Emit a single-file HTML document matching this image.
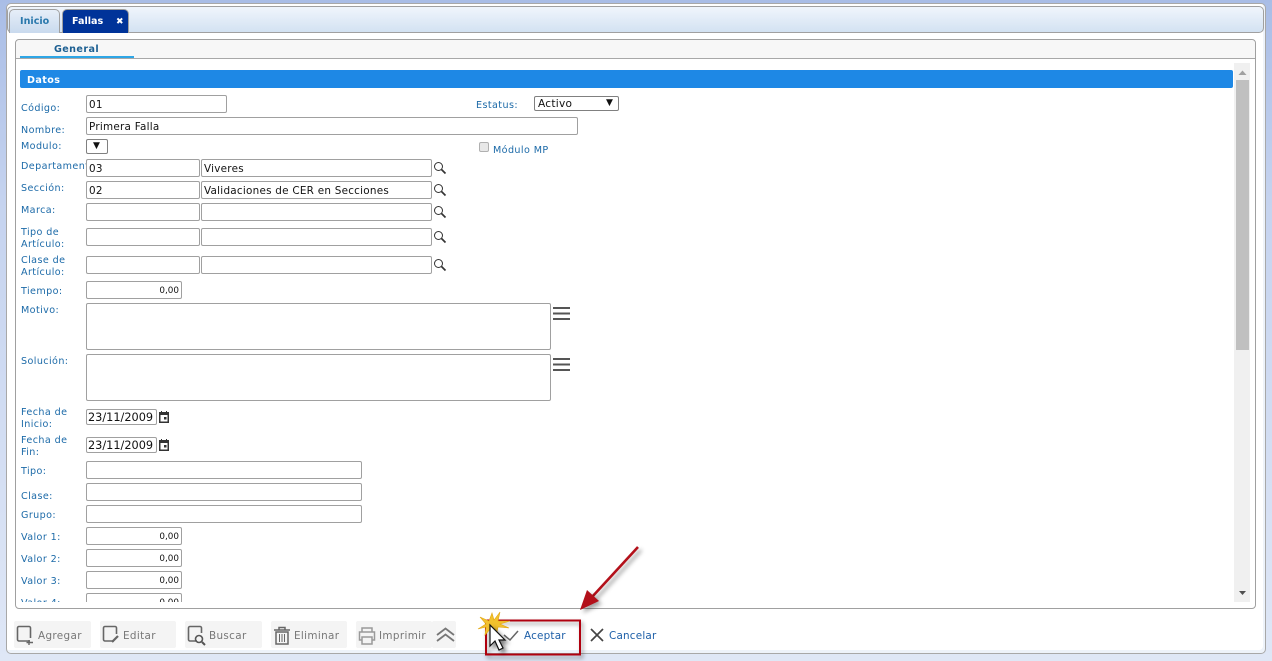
<!DOCTYPE html>
<html><head><meta charset="utf-8">
<style>
html,body{margin:0;padding:0}
body{width:1272px;height:661px;overflow:hidden;position:relative;background:linear-gradient(#a9bde6,#c5d3ef 30%,#dfe7f6 100%);font-family:"DejaVu Sans","Liberation Sans",sans-serif}
div,span{position:absolute;box-sizing:border-box;white-space:nowrap}
.l{left:21px;font-size:9.6px;line-height:12px;color:#1c6aa8;letter-spacing:.4px;margin-top:2px}
.i{background:#fff;border:1px solid #a0a0a0;border-radius:2px;font-size:10.4px;line-height:16px;color:#111;padding:1px 0 0 2px;height:18px;letter-spacing:.25px}
.n{text-align:right;padding:1px 2px 0 0;font-size:8.8px;width:96px;left:86px;height:18px;letter-spacing:0}
.d{left:86px;width:71px;height:16px;line-height:14px;font-size:11.3px;padding:1px 0 0 1px;overflow:hidden;letter-spacing:0}
.btn{top:621px;height:27px;background:#f4f4f4;border-radius:2px}
.t{font-size:10.4px;color:#777;line-height:14px;top:629px;letter-spacing:.35px}
svg{position:absolute;overflow:visible}
</style></head><body>
<div style="left:6px;top:3px;width:1260px;height:651px;background:#fff;border:1px solid #a8a8a8;border-radius:5px;box-shadow:inset -2px -3px 0 #eef3fa"></div>
<div style="left:7px;top:6px;width:1257px;height:27px;background:linear-gradient(#f0f5fc,#d3e2f2);border:1px solid #a0a0a0;border-radius:5px"></div>
<div style="left:9px;top:9px;width:51px;height:24px;background:linear-gradient(#e6eef8,#c9daee);border:1px solid #a0a0a0;border-bottom:0;border-radius:5px 5px 0 0;font-size:9.6px;font-weight:bold;color:#2a78ac;line-height:24px;padding-left:10px">Inicio</div>
<div style="left:62px;top:9px;width:67px;height:24px;background:#003399;border:1px solid #a0a0a0;border-bottom:0;border-radius:5px 5px 0 0;font-size:9.6px;font-weight:bold;color:#fff;line-height:24px;padding-left:9px">Fallas<span style="left:53px;top:0;font-size:9px">✖</span></div>

<div style="left:15px;top:39px;width:1241px;height:570px;background:#fff;border:1px solid #a0a0a0;border-radius:4px"></div>
<div style="left:16px;top:40px;width:1239px;height:19px;background:#f7f7f7;border-bottom:1px solid #a8a8a8;border-radius:4px 4px 0 0"></div>
<div style="left:20px;top:56px;width:114px;height:2px;background:#2ea6e6"></div>
<div style="left:54px;top:43px;font-size:9.6px;font-weight:bold;color:#1c5f92;line-height:13px;letter-spacing:.4px">General</div>
<div style="left:20px;top:70px;width:1213px;height:18px;background:#1e88e5;border-radius:2px;color:#fff;font-size:9.6px;font-weight:bold;line-height:19px;padding:1px 0 0 7px;letter-spacing:.4px">Datos</div>

<div style="left:1234px;top:63px;width:16px;height:539px;background:#f0f0f0"></div>
<div style="left:1236px;top:80px;width:13px;height:270px;background:#c0c0c0"></div>
<svg style="left:0;top:0" width="1272" height="661"><path d="M1238.500 75L1242.500 70.500L1246.500 75Z" fill="#a0a0a0"/><path d="M1239 591H1246L1242.500 595Z" fill="#505050"/></svg>

<div class="l" style="top:101px">Código:</div>
<div class="i" style="left:86px;top:95px;width:141px">01</div>
<div class="l" style="top:98px;left:476px">Estatus:</div>
<div class="i" style="left:534px;top:96px;width:85px;height:15px;line-height:13px;padding:1px 0 0 3px;border-color:#808080;font-size:10.6px">Activo<span style="left:71px;top:0;font-size:9px;color:#111">▼</span></div>
<div class="l" style="top:123px">Nombre:</div>
<div class="i" style="left:86px;top:117px;width:492px">Primera Falla</div>
<div class="l" style="top:139px">Modulo:</div>
<div class="i" style="left:86px;top:139px;width:22px;height:15px;line-height:13px;padding:0 0 0 6px;font-size:9px;border-color:#808080">▼</div>
<div style="left:479px;top:142px;width:10px;height:10px;background:#e8e8e8;border:1px solid #b0b0b0;border-radius:2px"></div>
<div class="l" style="top:143px;left:493px">Módulo MP</div>

<div class="l" style="top:159px;width:65px;overflow:hidden">Departamento:</div>
<div class="i" style="left:86px;top:159px;width:114px">03</div>
<div class="i" style="left:201px;top:159px;width:231px">Viveres</div>
<div class="l" style="top:181px">Sección:</div>
<div class="i" style="left:86px;top:181px;width:114px">02</div>
<div class="i" style="left:201px;top:181px;width:231px">Validaciones de CER en Secciones</div>
<div class="l" style="top:203px">Marca:</div>
<div class="i" style="left:86px;top:203px;width:114px"></div>
<div class="i" style="left:201px;top:203px;width:231px"></div>
<div class="l" style="top:225px">Tipo de<br>Artículo:</div>
<div class="i" style="left:86px;top:228px;width:114px"></div>
<div class="i" style="left:201px;top:228px;width:231px"></div>
<div class="l" style="top:253px">Clase de<br>Artículo:</div>
<div class="i" style="left:86px;top:256px;width:114px"></div>
<div class="i" style="left:201px;top:256px;width:231px"></div>

<svg style="left:0;top:0" width="1272" height="661" fill="none" stroke="#333">
<g stroke-width="1"><circle cx="438.500" cy="166.500" r="4"/><path d="M441.500 169.500L445.500 173.500" stroke-width="1.700"/>
<circle cx="438.500" cy="188.500" r="4"/><path d="M441.500 191.500L445.500 195.500" stroke-width="1.700"/>
<circle cx="438.500" cy="210.500" r="4"/><path d="M441.500 213.500L445.500 217.500" stroke-width="1.700"/>
<circle cx="438.500" cy="235.500" r="4"/><path d="M441.500 238.500L445.500 242.500" stroke-width="1.700"/>
<circle cx="438.500" cy="263.500" r="4"/><path d="M441.500 266.500L445.500 270.500" stroke-width="1.700"/></g>
<g stroke="#555" stroke-width="2"><path d="M553 308H570M553 313.500H570M553 319H570M553 359H570M553 364.500H570M553 370H570"/></g>
<g stroke="#999" stroke-width="1"><path d="M541 347L548 340M545 347L548 344M541 398L548 391M545 398L548 395"/></g>
<g fill="#333" stroke="none"><path d="M159 412h2v-1h1v1h4v-1h1v1h2v11h-10zM160.500 415v6.500h7V415zM164 417h2.500v2.500H164z" fill-rule="evenodd"/><path d="M159 440h2v-1h1v1h4v-1h1v1h2v11h-10zM160.500 443v6.500h7V443zM164 445h2.500v2.500H164z" fill-rule="evenodd"/></g>
</svg>

<div class="l" style="top:284px">Tiempo:</div>
<div class="i n" style="top:281px">0,00</div>
<div class="l" style="top:303px">Motivo:</div>
<div class="i" style="left:86px;top:303px;width:465px;height:47px"></div>
<div class="l" style="top:354px">Solución:</div>
<div class="i" style="left:86px;top:354px;width:465px;height:47px"></div>
<div class="l" style="top:405px">Fecha de<br>Inicio:</div>
<div class="i d" style="top:409px">23/11/2009</div>
<div class="l" style="top:433px">Fecha de<br>Fin:</div>
<div class="i d" style="top:437px">23/11/2009</div>
<div class="l" style="top:464px">Tipo:</div>
<div class="i" style="left:86px;top:461px;width:276px"></div>
<div class="l" style="top:489px">Clase:</div>
<div class="i" style="left:86px;top:483px;width:276px"></div>
<div class="l" style="top:508px">Grupo:</div>
<div class="i" style="left:86px;top:505px;width:276px"></div>
<div class="l" style="top:530px">Valor 1:</div>
<div class="i n" style="top:527px">0,00</div>
<div class="l" style="top:552px">Valor 2:</div>
<div class="i n" style="top:549px">0,00</div>
<div class="l" style="top:574px">Valor 3:</div>
<div class="i n" style="top:571px">0,00</div>
<div style="left:16px;top:590px;width:1218px;height:12px;overflow:hidden">
<div class="l" style="top:6px;left:5px">Valor 4:</div>
<div class="i n" style="top:3px;left:70px">0,00</div>
</div>

<div class="btn" style="left:14px;width:77px"></div>
<div class="btn" style="left:100px;width:76px"></div>
<div class="btn" style="left:185px;width:77px"></div>
<div class="btn" style="left:271px;width:76px"></div>
<div class="btn" style="left:356px;width:76px"></div>
<div class="btn" style="left:432px;width:24px"></div>
<div class="t" style="left:38px">Agregar</div>
<div class="t" style="left:123px">Editar</div>
<div class="t" style="left:209px">Buscar</div>
<div class="t" style="left:294px">Eliminar</div>
<div class="t" style="left:379px">Imprimir</div>
<div class="t" style="left:524px;color:#1d5fa8;letter-spacing:.2px">Aceptar</div>
<div class="t" style="left:609px;color:#1d5fa8;letter-spacing:.2px">Cancelar</div>

<svg style="left:0;top:0" width="1272" height="661" fill="none">
<g stroke="#666" stroke-width="1.600">
<path d="M30 641H19a1.500 1.500 0 0 1-1.500-1.500V628a1.500 1.500 0 0 1 1.500-1.500H29a1.500 1.500 0 0 1 1.500 1.500V638"/><path d="M29 640V645M26.500 642.500H33" stroke-width="1.400"/>
<path d="M114 641H105a1.500 1.500 0 0 1-1.500-1.500V628a1.500 1.500 0 0 1 1.500-1.500H115a1.500 1.500 0 0 1 1.500 1.500V634"/><path d="M112 642L118 636" stroke-width="2.200"/>
<path d="M197 641H190a1.500 1.500 0 0 1-1.500-1.500V628a1.500 1.500 0 0 1 1.500-1.500H200a1.500 1.500 0 0 1 1.500 1.500V633"/><circle cx="199" cy="639" r="3.500" stroke="#555"/><path d="M202 642L205 645" stroke="#555" stroke-width="2"/>
<path d="M274 630H290M279 630V627.500H285V630" stroke-width="1.500"/><path d="M276 632H288V644H276Z" stroke-width="1.500"/><path d="M279.500 634V642M282 634V642M284.500 634V642" stroke-width="1"/>
</g>
<g stroke="#999" stroke-width="1.500">
<path d="M362 632V628H372V632M362 640H359.500V632H374.500V640H372M362 637H372V644H362Z"/>
</g>
<g stroke="#777" stroke-width="1.800"><path d="M437 635L445.500 628.500L454 635M437 641L445.500 634.500L454 641"/></g>
<path d="M504 635L510 640L518 631" stroke="#666" stroke-width="1.500"/>
<path d="M591 629L603 641M603 629L591 641" stroke="#444" stroke-width="1.700"/>
<rect x="486" y="620.500" width="94" height="34" stroke="#b0000e" stroke-width="2" style="filter:drop-shadow(2px 3px 2px rgba(0,0,0,.4))"/>
<path d="M638 547L592 597" stroke="#b3101a" stroke-width="2.600" style="filter:drop-shadow(3px 3px 2px rgba(0,0,0,.4))"/>
<path d="M580 610L587 590L599 601Z" fill="#b3101a" style="filter:drop-shadow(3px 3px 2px rgba(0,0,0,.35))"/>
<path d="M492 613L494 620L500 612L498 621L510 621L500 624L509 628L498 627L497 632L491 628L485 635L486 627L478 629L486 624L480 617L489 621Z" fill="#f2c12e" stroke="#e3a812" stroke-width=".6"/>
<path d="M490 625V646L495 641L499 650L503 648L499 640L505 640Z" fill="#fff" stroke="#111" stroke-width="1.200" style="filter:drop-shadow(3px 3px 2px rgba(0,0,0,.5))"/>
</svg>
</body></html>
